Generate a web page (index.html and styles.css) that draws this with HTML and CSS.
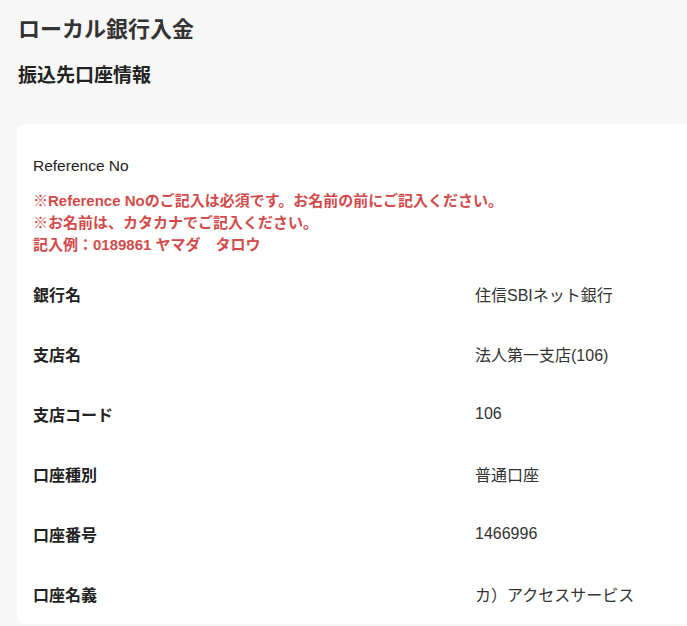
FILE: index.html
```html
<!DOCTYPE html>
<html lang="ja">
<head>
<meta charset="utf-8">
<link rel="stylesheet" href="styles.css">
</head>
<body>
<div class="page">
  <h1 class="title">ローカル銀行入金</h1>
  <h2 class="subtitle">振込先口座情報</h2>
  <section class="card">
    <div class="ref-label">Reference No</div>
    <div class="notes">
      <p>※Reference Noのご記入は必須です。お名前の前にご記入ください。</p>
      <p>※お名前は、カタカナでご記入ください。</p>
      <p>記入例：0189861 ヤマダ　タロウ</p>
    </div>
    <dl class="rows">
      <div class="row"><dt>銀行名</dt><dd>住信SBIネット銀行</dd></div>
      <div class="row"><dt>支店名</dt><dd>法人第一支店(106)</dd></div>
      <div class="row"><dt>支店コード</dt><dd>106</dd></div>
      <div class="row"><dt>口座種別</dt><dd>普通口座</dd></div>
      <div class="row"><dt>口座番号</dt><dd>1466996</dd></div>
      <div class="row"><dt>口座名義</dt><dd>カ）アクセスサービス</dd></div>
    </dl>
  </section>
</div>
</body>
</html>
```
FILE: styles.css
```css
html, body {
  margin: 0;
  padding: 0;
  background: #f7f7f7;
  overflow: hidden;
}
body {
  font-family: "Liberation Sans", "Noto Sans CJK JP", sans-serif;
  color: #333;
}
.page {
  padding: 15px 0 0 17px;
}
.title {
  margin: 0 0 0 1px;
  font-size: 22px;
  line-height: 30px;
  font-weight: 700;
  color: #333;
}
.subtitle {
  margin: 18px 0 0 1px;
  font-size: 19px;
  line-height: 26px;
  font-weight: 700;
  color: #222;
}
.card {
  margin-top: 35px;
  background: #fff;
  border-radius: 8px 0 0 8px;
  padding: 31px 0 0 16px;
}
.ref-label {
  font-size: 15.5px;
  line-height: 22px;
  color: #222;
}
.notes {
  margin-top: 13px;
  color: #d24b4b;
  font-weight: 700;
  font-size: 15px;
  line-height: 22px;
}
.notes p {
  margin: 0;
}
.rows {
  margin: 8px 0 0 0;
}
.row {
  display: grid;
  grid-template-columns: 442px 1fr;
  height: 60px;
  align-items: center;
}
.row dt {
  font-weight: 700;
  font-size: 16px;
  color: #222;
}
.row dd {
  margin: 0;
  font-size: 16px;
  color: #333;
}
```
